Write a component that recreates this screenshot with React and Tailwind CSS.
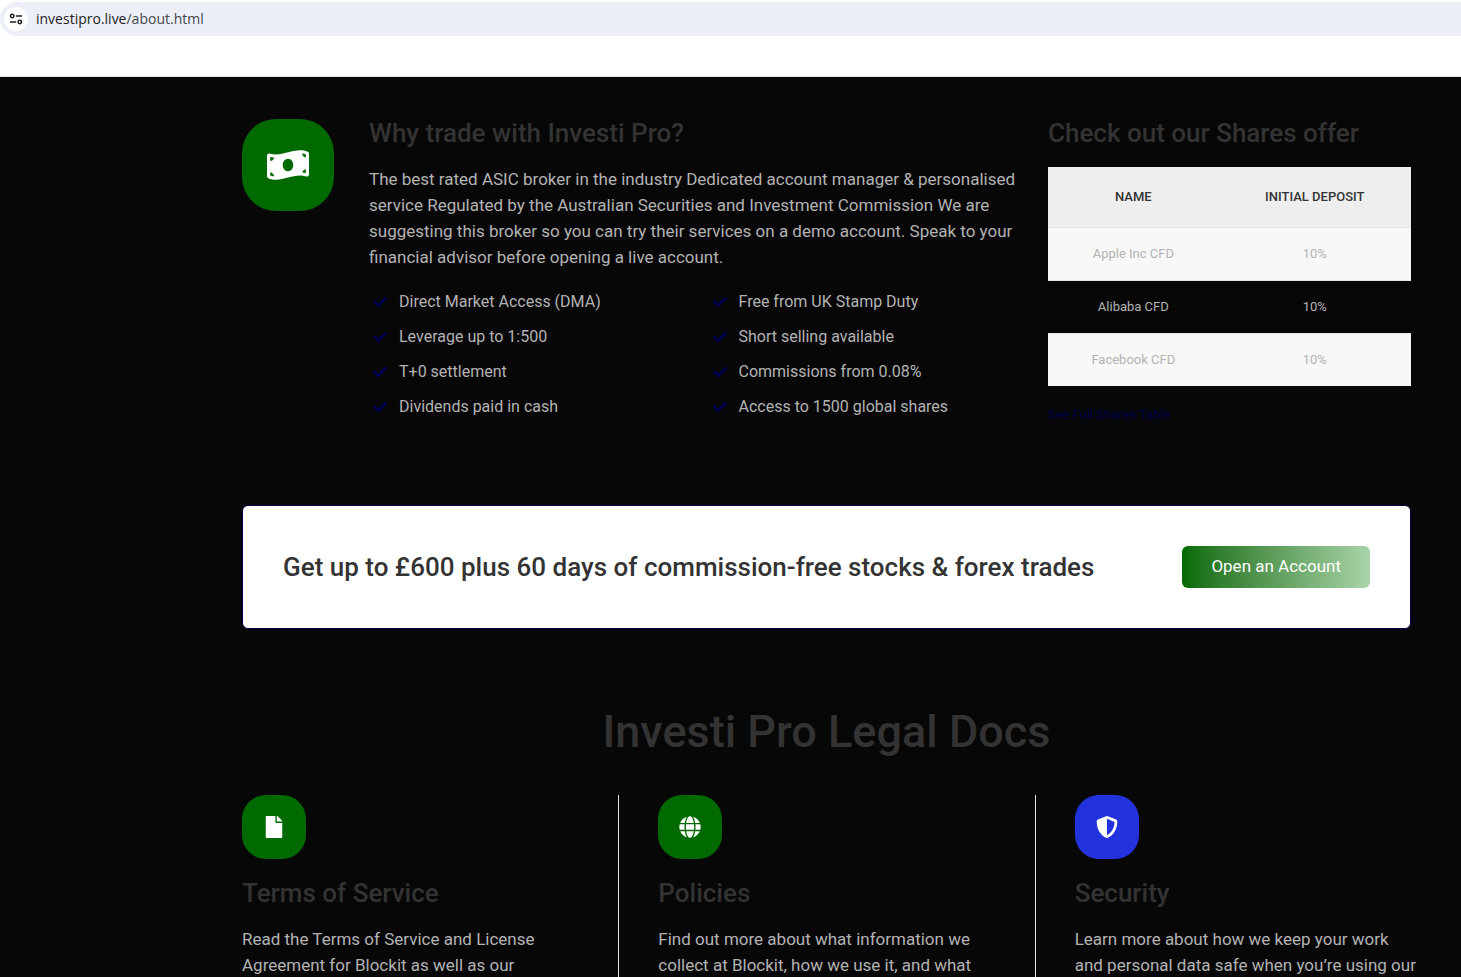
import React from "react";
import { FaCheck, FaFile, FaGlobe, FaMoneyBillWave, FaShieldAlt } from "react-icons/fa";

const features = [
    "Direct Market Access (DMA)",
    "Free from UK Stamp Duty",
    "Leverage up to 1:500",
    "Short selling available",
    "T+0 settlement",
    "Commissions from 0.08%",
    "Dividends paid in cash",
    "Access to 1500 global shares",
];

const shares = [
    { name: "Apple Inc CFD", deposit: "10%" },
    { name: "Alibaba CFD", deposit: "10%" },
    { name: "Facebook CFD", deposit: "10%" },
];

const docs = [
    {
        title: "Terms of Service",
        lines: ["Read the Terms of Service and License", "Agreement for Blockit as well as our"],
        icon: FaFile,
        color: "bg-[#006a00]",
    },
    {
        title: "Policies",
        lines: ["Find out more about what information we", "collect at Blockit, how we use it, and what"],
        icon: FaGlobe,
        color: "bg-[#006a00]",
    },
    {
        title: "Security",
        lines: ["Learn more about how we keep your work", "and personal data safe when you’re using our"],
        icon: FaShieldAlt,
        color: "bg-[#2233dd]",
    },
];

const AddressBar = () => {
    return (
        <div className="h-[77px] bg-white border-b border-gray-200 pt-[2px]">
            <div className="flex items-center h-[34px] rounded-l-full bg-[#eceef8] pl-1">
                <button
                    type="button"
                    aria-label="Site information"
                    className="flex items-center justify-center size-6 rounded-full bg-white"
                >
                    <svg width="14" height="14" viewBox="0 0 14 14" fill="none" stroke="#1f1f1f" strokeWidth="1.5">
                        <circle cx="3.2" cy="4" r="1.7" />
                        <path d="M6.8 4H13M1 10h6.2" />
                        <circle cx="10.8" cy="10" r="1.7" />
                    </svg>
                </button>
                <p className="pl-2 text-sm text-[#1f1f1f] font-['Open_Sans',sans-serif]">
                    investipro.live<span className="text-[#474747]">/about.html</span>
                </p>
            </div>
        </div>
    );
};

const WhyTrade = () => {
    return (
        <div className="col-span-2 flex gap-[35px]">
            <div className="flex shrink-0 items-center justify-center size-[92px] rounded-[34px] bg-[#006a00]">
                <FaMoneyBillWave className="size-[42px] text-white" />
            </div>
            <div className="min-w-0 flex-1">
                <h3 className="text-[26px] leading-7 font-medium text-[#333333]">Why trade with Investi Pro?</h3>
                <p className="mt-[19px] text-[17px] leading-[26px] whitespace-nowrap">
                    The best rated ASIC broker in the industry Dedicated account manager & personalised
                    <br />
                    service Regulated by the Australian Securities and Investment Commission We are
                    <br />
                    suggesting this broker so you can try their services on a demo account. Speak to your
                    <br />
                    financial advisor before opening a live account.
                </p>
                <ul className="mt-[19px] grid grid-cols-2 gap-x-10 gap-y-[10px] text-base leading-[25px]">
                    {features.map((item) => (
                        <li key={item} className="flex items-center">
                            <FaCheck className="ml-1 mr-3 size-[14px] text-[#000050]" />
                            {item}
                        </li>
                    ))}
                </ul>
            </div>
        </div>
    );
};

const SharesOffer = () => {
    return (
        <div>
            <h3 className="text-[26px] leading-7 font-medium text-[#333333]">Check out our Shares offer</h3>
            <table className="mt-5 w-full text-center text-[13px] leading-5">
                <thead className="bg-[#eeeeee] text-[#333333] uppercase">
                    <tr>
                        <th className="w-[47%] py-5 font-medium">Name</th>
                        <th className="py-5 font-medium">Initial deposit</th>
                    </tr>
                </thead>
                <tbody>
                    {shares.map((share) => (
                        <tr key={share.name} className="border-t border-[#e5e5e5] odd:bg-[#f8f8f8]">
                            <td className="py-4">{share.name}</td>
                            <td className="py-4">{share.deposit}</td>
                        </tr>
                    ))}
                </tbody>
            </table>
            <a href="#shares" className="mt-[19px] block w-fit text-[13px] leading-5 text-[#000048]">
                See Full Shares Table
            </a>
        </div>
    );
};

const App = () => {
    return (
        <div className="min-h-screen bg-[#070707] text-[#b3b3b3] font-[Roboto,sans-serif]">
            <AddressBar />
            <main className="pl-[242px] pr-[50px] pt-[42px]">
                <section className="grid grid-cols-3 gap-10">
                    <WhyTrade />
                    <SharesOffer />
                </section>

                {/* Account banner */}
                <section className="mt-20 flex items-center justify-between rounded-md border border-[#000048] bg-white px-10 py-10">
                    <h3 className="text-[26px] leading-8 font-medium text-[#333333]">
                        Get up to £600 plus 60 days of commission-free stocks & forex trades
                    </h3>
                    <button
                        type="button"
                        className="h-[42px] rounded-md bg-linear-to-r from-[#006a00] to-[#a8d4a8] px-[29px] text-[17px] text-white"
                    >
                        Open an Account
                    </button>
                </section>

                {/* Legal docs */}
                <section className="mt-20">
                    <h1 className="text-center text-[45px] leading-[46px] font-medium text-[#333333]">
                        Investi Pro Legal Docs
                    </h1>
                    <div className="mt-10 grid grid-cols-3 gap-20">
                        {docs.map((doc) => (
                            <article
                                key={doc.title}
                                className="border-[#e5e5e5] not-first:-ml-10 not-first:border-l not-first:pl-[39px]"
                            >
                                <div className={`flex items-center justify-center size-16 rounded-3xl ${doc.color}`}>
                                    <doc.icon className="size-[22px] text-white" />
                                </div>
                                <h3 className="mt-5 text-[26px] leading-7 font-medium text-[#333333]">{doc.title}</h3>
                                <p className="mt-[19px] text-[17px] leading-[26px] whitespace-nowrap">
                                    {doc.lines[0]}
                                    <br />
                                    {doc.lines[1]}
                                </p>
                            </article>
                        ))}
                    </div>
                </section>
            </main>
        </div>
    );
};

export default App;
